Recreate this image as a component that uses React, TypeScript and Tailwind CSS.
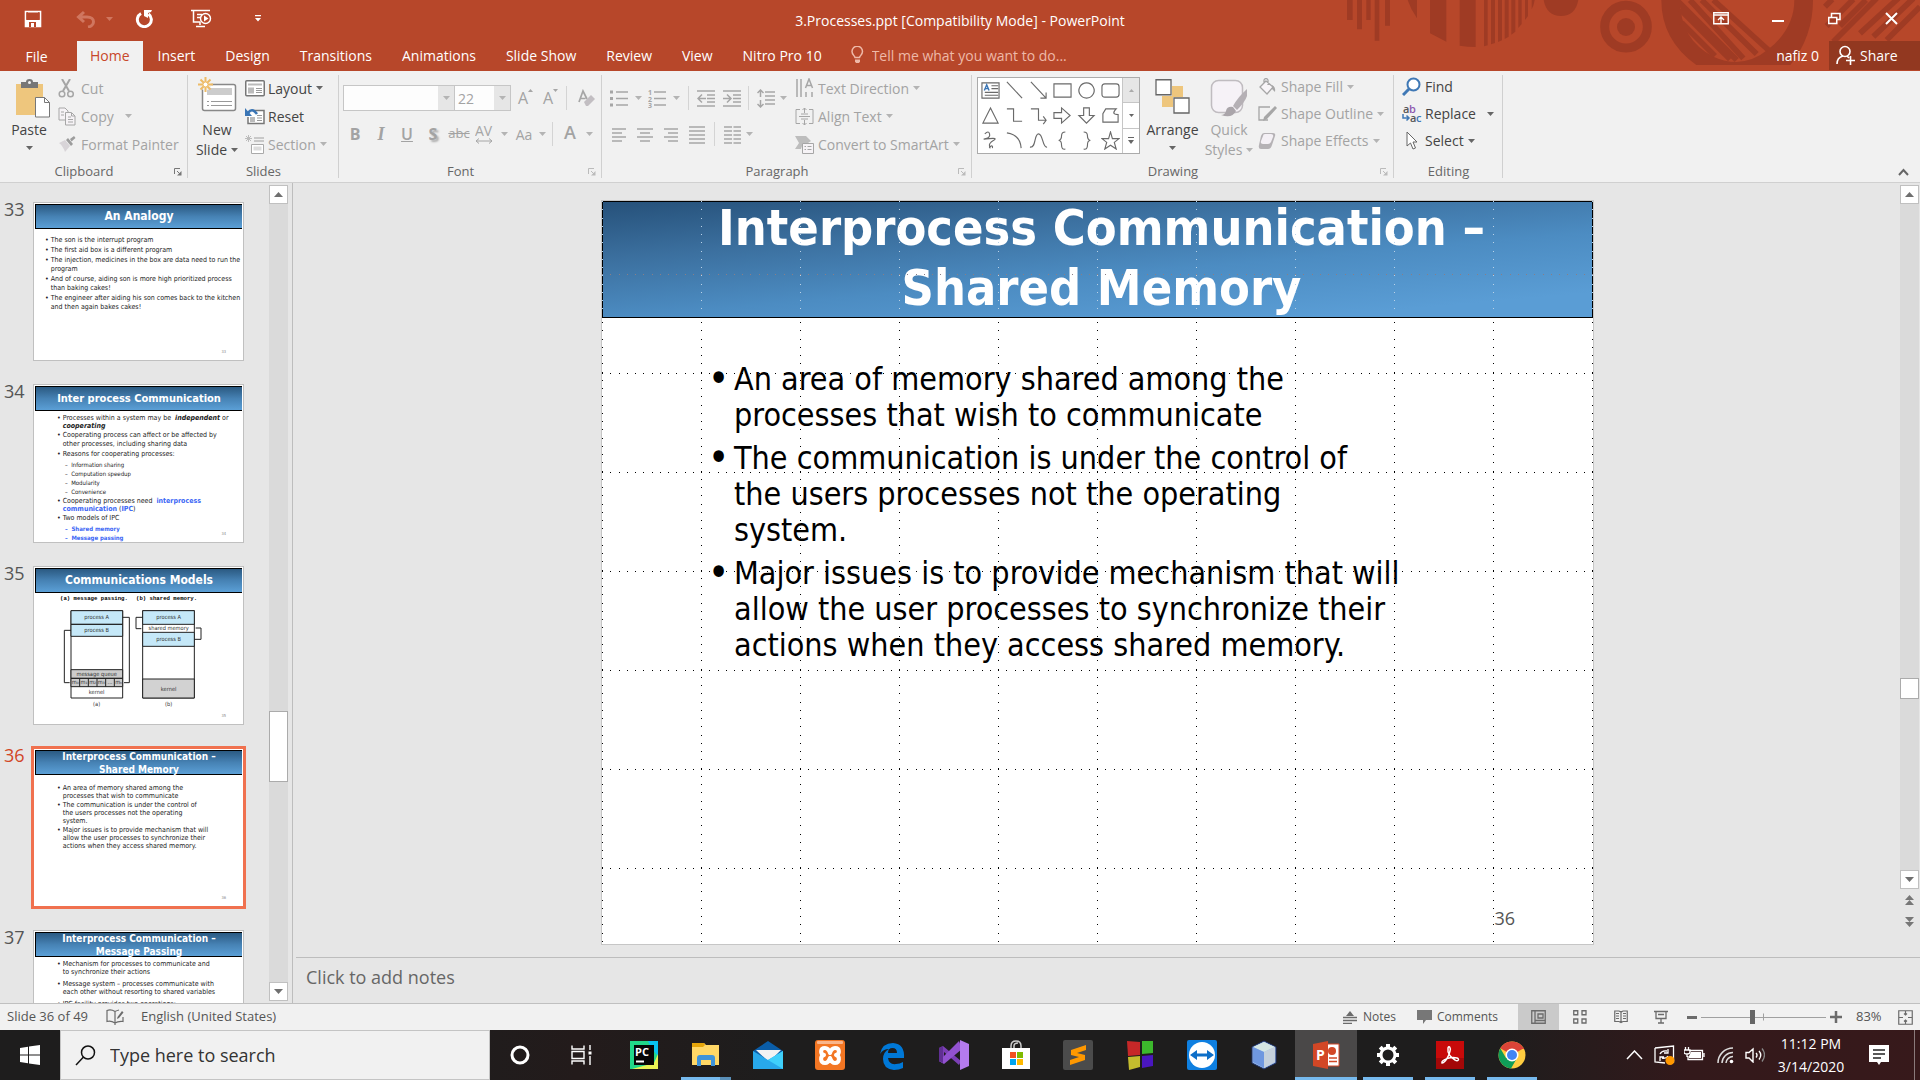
import type { ReactNode } from "react";

type IconProps = { children: ReactNode; w?: number; h?: number; box?: string; className?: string };

function Icon({ children, w = 18, h = 18, box, className = "" }: IconProps) {
  return (
    <svg
      width={w}
      height={h}
      viewBox={box ?? `0 0 ${w} ${h}`}
      fill="none"
      aria-hidden="true"
      className={`shrink-0 ${className}`}
    >
      {children}
    </svg>
  );
}

function Caret({ on = false, className = "" }: { on?: boolean; className?: string }) {
  return (
    <Icon w={7} h={4} className={className}>
      <path d="M0 0h7L3.5 4z" fill={on ? "#666" : "#b4b4b4"} />
    </Icon>
  );
}

/* ---------- title bar ---------- */

function Pattern() {
  const c = "#9f3b24";
  return (
    <svg className="absolute right-0 top-0" width="580" height="71" viewBox="0 0 1740 213" aria-hidden="true">
      <g fill={c}>
        <path d="M21 0h17v60H21zM51 0h15v88H51zM79 0h13v60H79zM104 0h14v122h-14zM135 0h15v77h-15z" />
        <path d="M203 0h28v55Q212 28 203 0zM270 0h49v125l-49-25zM359 0h48v141q-24 0-48-4z" />
        <path d="M432 0h11v136l-11 3zM453 0h12v129l-12 4zM474 0h12v121l-12 5zM494 0h12v110l-12 7zM514 0h12v95l-12 9zM535 0h10v72l-10 12zM555 0h9v48l-9 12zM575 0h9q-2 16-9 28z" />
        <path d="M611 0h104q-9 48-52 48t-52-48z" />
        <circle cx="858" cy="81" r="27" />
      </g>
      <circle cx="858" cy="80" r="64" fill="none" stroke={c} strokeWidth="27" />
      <path d="M964 0h56q0 118 100 170 90 40 165-22 78-62 78-148h56q0 110-68 195h-282q-105-75-105-195z" fill={c} />
      <g stroke={c} strokeWidth="17">
        <path d="M1020 28l150 150M1025 68l100 100M1050 0l160 175M1085 0l165 162M1120 0l165 150M1010 0l180 180" />
        <path d="M1455 20l22-22M1460 78l80-80M1500 78l78-78M1480 125l130-130M1560 100l120-110M1600 110l120-115M1640 120l100-100" />
      </g>
    </svg>
  );
}

function TitleBar() {
  return (
    <div className="relative flex h-[41px] items-center text-white">
      <div className="flex flex-1 items-center pb-1">
        <button aria-label="Save" className="ml-[24px]">
          <Icon w={18} h={18}>
            <path d="M1.500 1.500h15v15h-15z" stroke="#fff" strokeWidth="1.600" />
            <path d="M1 10h16v7H1zM4 2h10v1H4z" fill="#fff" />
            <path d="M5 12h7v5H5z" fill="#b7472a" />
            <path d="M7 13h3v4H7z" fill="#fff" />
            <path d="M2.500 2.500h13v7h-13z" fill="#b7472a" />
          </Icon>
        </button>
        <button aria-label="Undo" className="ml-[34px]">
          <Icon w={20} h={18}>
            <path d="M8 2L2.500 7 8 12M3 7h8c9 0 8 9 1 10" stroke="#d0765f" strokeWidth="3" />
          </Icon>
        </button>
        <button aria-label="Undo options" className="ml-[10px]">
          <Icon w={7} h={4}>
            <path d="M0 0h7L3.500 4z" fill="#d0765f" />
          </Icon>
        </button>
        <button aria-label="Repeat" className="ml-[22px]">
          <Icon w={19} h={18}>
            <path d="M6 3.500A7 7 0 1 0 13.500 4" stroke="#fff" strokeWidth="3" />
            <path d="M9 0h8l-1 2-3 1v5L9 6z" fill="#fff" />
          </Icon>
        </button>
        <button aria-label="Start from beginning" className="ml-[37px]">
          <Icon w={21} h={19}>
            <path d="M0 1.500h19M2.500 2v11h7M6 5.500h5M6 8.500h3M9 13v3M5 17.500h9" stroke="#fff" strokeWidth="1.500" />
            <circle cx="14.500" cy="9.500" r="5" stroke="#fff" strokeWidth="1.400" fill="#b7472a" />
            <path d="M13 6.500l4.500 3-4.500 3z" fill="#fff" />
          </Icon>
        </button>
        <button aria-label="Customize quick access toolbar" className="ml-[43px]">
          <Icon w={6} h={7}>
            <path d="M0 0h6v1.300H0zM0 3h6L3 6.500z" fill="#fff" />
          </Icon>
        </button>
      </div>
      <h1 className="text-[14px]">3.Processes.ppt [Compatibility Mode] - PowerPoint</h1>
      <div className="flex flex-1 items-center justify-end pb-1">
        <button aria-label="Ribbon display options" className="flex w-[57px] justify-center">
          <Icon w={16} h={13}>
            <path d="M.750.750h14.500v11H.750zM1 3h14M8 11V5M5 8l3-3 3 3" stroke="#fff" strokeWidth="1.400" />
          </Icon>
        </button>
        <button aria-label="Minimize" className="flex w-[57px] justify-center pt-1">
          <span className="h-[2px] w-[12px] bg-white" />
        </button>
        <button aria-label="Restore" className="flex w-[57px] justify-center">
          <Icon w={13} h={13}>
            <path d="M.750 5.500h8v6h-8zM3.500 5V1.500h8.500v6H9" stroke="#fff" strokeWidth="1.500" />
          </Icon>
        </button>
        <button aria-label="Close" className="flex w-[57px] justify-center">
          <Icon w={13} h={13}>
            <path d="M1 1l11 11M12 1L1 12" stroke="#fff" strokeWidth="2" />
          </Icon>
        </button>
      </div>
    </div>
  );
}

const tabs = ["Insert", "Design", "Transitions", "Animations", "Slide Show", "Review", "View", "Nitro Pro 10"];

function TabStrip() {
  return (
    <nav className="relative flex h-[30px] items-stretch text-[14px] text-white">
      <button className="w-[77px] pr-1">File</button>
      <button className="bg-[#f1f1f1] px-[13px] pb-[2px] text-[#c8472a]">Home</button>
      {tabs.map((t) => (
        <button key={t} className="px-[15px] pb-[2px]">
          {t}
        </button>
      ))}
      <label className="ml-[14px] flex items-center gap-2 pb-[2px] text-[#eeb9a8]">
        <Icon w={13} h={18}>
          <path d="M4 11.500C3.500 9.500 1 8.500 1 5.500a5 5 0 0 1 10.500 0C11.500 8.500 9 9.500 8.500 11.500z" stroke="#eeb9a8" strokeWidth="1.500" />
          <path d="M4 13.500h5v2L8 17H5l-1-1.500z" fill="#eeb9a8" />
        </Icon>
        <input
          aria-label="Tell me what you want to do"
          placeholder="Tell me what you want to do..."
          className="w-[220px] bg-transparent placeholder:text-[#eeb9a8]"
        />
      </label>
      <div className="ml-auto flex">
        <button className="px-[10px] pb-[2px]">nafiz 0</button>
        <button className="mb-px flex w-[91px] items-center gap-1 bg-[#923820] pl-[7px] pb-px">
          <Icon w={20} h={20}>
            <circle cx="9" cy="6.500" r="5" stroke="#fff" strokeWidth="1.600" />
            <path d="M1 19c0-4 2-7 6-8M11 11l2 2M10 15.500h9M14.500 11v9" stroke="#fff" strokeWidth="1.600" />
          </Icon>
          Share
        </button>
      </div>
    </nav>
  );
}

/* ---------- ribbon ---------- */

function Launcher({ on = false }: { on?: boolean }) {
  return (
    <button aria-label="More options" className="absolute bottom-[6px] right-[6px]">
      <Icon w={8} h={8}>
        <path d="M.500 6V.500H6M3 3l3 3" stroke={on ? "#777" : "#bbb"} />
        <path d="M7.500 3v4.500H3z" fill={on ? "#777" : "#bbb"} />
      </Icon>
    </button>
  );
}

function Group({
  label,
  width,
  launcher,
  children,
}: {
  label: string;
  width: string;
  launcher?: "on" | "off";
  children: ReactNode;
}) {
  return (
    <section aria-label={label} className={`relative flex flex-col ${width}`}>
      <div className="flex flex-1">{children}</div>
      <div className={`flex h-5 items-center justify-center text-[13px] text-[#666] ${launcher ? "pr-5" : ""}`}>{label}</div>
      {launcher && <Launcher on={launcher === "on"} />}
      <div className="absolute bottom-1 right-0 top-1 w-px bg-[#d0d0d0]" />
    </section>
  );
}

function Row({
  icon,
  text,
  on = false,
  caret,
  far = false,
}: {
  icon: ReactNode;
  text: string;
  on?: boolean;
  caret?: boolean;
  far?: boolean;
}) {
  return (
    <button className={`flex flex-1 items-center whitespace-nowrap text-[14px] ${on ? "text-[#444]" : "text-[#a3a3a3]"}`}>
      <span className="flex w-[23px] items-center">{icon}</span>
      {text}
      {caret && <Caret on={on} className={far ? "ml-[11px]" : "ml-1"} />}
    </button>
  );
}

function Sep({ className = "" }: { className?: string }) {
  return <span className={`h-6 w-px shrink-0 bg-[#d4d4d4] ${className}`} />;
}

function Tool({ label, width, children }: { label: string; width: string; children: ReactNode }) {
  return (
    <button aria-label={label} className={`flex shrink-0 items-center justify-center ${width}`}>
      {children}
    </button>
  );
}

const g = "#a6a6a6";

function Clipboard() {
  return (
    <Group label="Clipboard" width="w-[188px]" launcher="on">
      <button className="ml-2 flex w-[42px] flex-col items-center pt-2 text-[14px] text-[#444]">
        <Icon w={36} h={39} className="ml-2">
          <path d="M1 5h27v31H1z" fill="#eec67d" />
          <path d="M6 9V3h5q0-3 3.500-3T18 3h5v6z" fill="#777" />
          <circle cx="14.500" cy="3.500" r="1.500" fill="#f1f1f1" />
          <path d="M20.500 18.500h9l5 5v14.500h-14z" fill="#fff" stroke="#777" />
          <path d="M29.500 18.500v5h5" stroke="#777" />
        </Icon>
        <span className="leading-6">Paste</span>
        <Caret on className="mt-1" />
      </button>
      <div className="ml-2 flex h-[87px] flex-col pt-[3px]">
        <Row
          text="Cut"
          icon={
            <Icon w={17} h={19}>
              <path d="M4 0l7 12M12 0L5 12" stroke={g} strokeWidth="2" />
              <circle cx="4" cy="15" r="2.800" stroke={g} strokeWidth="1.500" />
              <circle cx="12.500" cy="15" r="2.800" stroke={g} strokeWidth="1.500" />
            </Icon>
          }
        />
        <Row
          text="Copy"
          caret
          far
          icon={
            <Icon w={18} h={19}>
              <path d="M1 1h6l3 3v9H1z" fill="#f6f3f6" stroke={g} />
              <path d="M7.500 5.500h6l3.500 3.500v9H7.500z" fill="#f6f3f6" stroke={g} />
              <path d="M3 5h3M3 8h3M10 10h3M10 12.500h5M10 15h5M13.500 6v3H17" stroke={g} />
            </Icon>
          }
        />
        <Row
          text="Format Painter"
          icon={
            <Icon w={18} h={18}>
              <path d="M1 8l6-3 5 6-5 6c-1-3-3-7-6-9z" fill="#d8d4d8" />
              <path d="M8 5l5 6 2-2-5-6zM12 4l4-3 1.500 2-4 3.500z" fill="#9c9c9c" />
            </Icon>
          }
        />
      </div>
    </Group>
  );
}

function Slides() {
  return (
    <Group label="Slides" width="w-[151px]">
      <button className="ml-[6px] flex w-[46px] flex-col items-center pt-[6px] text-[14px] text-[#444]">
        <Icon w={39} h={36}>
          <rect x="4.500" y="7.500" width="33" height="26" rx="2" fill="#fff" stroke="#888" strokeWidth="1.500" />
          <path d="M9 11h25v7H9z" fill="#ccc" />
          <path d="M9 24.500h2M13 24.500h21M9 28.500h2M13 28.500h21" stroke="#999" />
          <circle cx="7.500" cy="7.500" r="6" fill="#f1f1f1" />
          <path d="M7.500 0v15M0 7.500h15M2.500 2.500l10 10M12.500 2.500l-10 10" stroke="#eebb66" strokeWidth="2" />
          <circle cx="7.500" cy="7.500" r="2.500" fill="#fff" stroke="#eebb66" />
        </Icon>
        <span className="mt-[6px] leading-[21px]">New</span>
        <span className="flex items-center gap-1 leading-5">
          Slide <Caret on />
        </span>
      </button>
      <div className="ml-[5px] flex h-[87px] flex-col pt-[3px]">
        <Row
          on
          text="Layout"
          caret
          icon={
            <Icon w={20} h={17}>
              <rect x=".750" y=".750" width="18.500" height="15" rx="1" fill="#fff" stroke="#777" strokeWidth="1.500" />
              <path d="M3 3.500h14v2H3zM3 7.500h6v6H3z" fill="#bbb" />
              <path d="M11 8.500h6M11 10.500h6M11 12.500h6" stroke="#999" />
            </Icon>
          }
        />
        <Row
          on
          text="Reset"
          icon={
            <Icon w={20} h={18}>
              <path d="M8 3.500h11v13H3V10" fill="#fff" stroke="#777" strokeWidth="1.500" />
              <path d="M5 10h5v5H5z" fill="#bbb" />
              <path d="M12 8.500h5M12 11h5M12 13.500h5" stroke="#999" />
              <path d="M3 6q4-6 9 1" stroke="#3a75b5" strokeWidth="2.500" />
              <path d="M0 1v8h7z" fill="#3a75b5" />
            </Icon>
          }
        />
        <Row
          text="Section"
          caret
          icon={
            <Icon w={20} h={19}>
              <path d="M3.500 0v7M0 3.500h7M1 1l5 5M6 1L1 6" stroke="#bbb" />
              <path d="M9 3h10M9 6h10" stroke="#bbb" strokeWidth="1.500" />
              <path d="M6.500 9.500h12v9h-12z" fill="#fff" stroke="#aaa" />
              <path d="M8.500 11.500h8v4h-8z" fill="#ddd" />
            </Icon>
          }
        />
      </div>
    </Group>
  );
}

function FontGroup() {
  return (
    <Group label="Font" width="w-[263px]" launcher="off">
      <div className="flex flex-col pl-1 text-[#a3a3a3]">
        <div className="mt-[14px] flex h-[26px] items-center">
          <label className="flex h-[26px] w-[112px] border border-[#c6c6c6] bg-[#fdfdfd]">
            <input aria-label="Font name" className="w-full min-w-0 bg-transparent" />
            <span className="flex w-4 shrink-0 items-center justify-center bg-[#e6e6e6]">
              <Caret />
            </span>
          </label>
          <label className="flex h-[26px] w-[56px] border border-l-0 border-[#c6c6c6] bg-[#fdfdfd]">
            <input aria-label="Font size" defaultValue="22" className="w-full min-w-0 bg-transparent pl-[3px] text-[14px]" />
            <span className="flex w-4 shrink-0 items-center justify-center bg-[#e6e6e6]">
              <Caret />
            </span>
          </label>
          <Tool label="Increase font size" width="ml-[2px] w-[25px]">
            <span className="text-[16px] leading-6">A</span>
            <Icon w={5} h={3} className="mb-4">
              <path d="M0 3h5L2.500 0z" fill={g} />
            </Icon>
          </Tool>
          <Tool label="Decrease font size" width="w-[25px]">
            <span className="text-[16px] leading-6">A</span>
            <Icon w={5} h={3} className="mb-4">
              <path d="M0 0h5L2.500 3z" fill={g} />
            </Icon>
          </Tool>
          <Sep className="ml-[3px]" />
          <Tool label="Clear formatting" width="ml-2 w-[22px]">
            <Icon w={17} h={19}>
              <path d="M1 13L5 2l4 8M2.500 9.500h5" stroke={g} strokeWidth="1.700" />
              <path d="M6 13l7-7 4 4-7 7H8z" fill="#c2bec2" />
            </Icon>
          </Tool>
        </div>
        <div className="-ml-px mt-[11px] flex h-6 items-center text-[16px]">
          <Tool label="Bold" width="w-[26px]">
            <b>B</b>
          </Tool>
          <Tool label="Italic" width="w-[26px]">
            <i className="font-['Liberation_Serif'] text-[18px] font-bold">I</i>
          </Tool>
          <Tool label="Underline" width="w-[26px]">
            <span className="font-semibold underline">U</span>
          </Tool>
          <Tool label="Text shadow" width="w-[26px]">
            <b className="[text-shadow:2px_2px_2px_#aaa]">S</b>
          </Tool>
          <Tool label="Strikethrough" width="w-[26px]">
            <span className="text-[13px] line-through">abc</span>
          </Tool>
          <Tool label="Character spacing" width="w-6">
            <Icon w={18} h={20}>
              <text x="0" y="12" fontSize="14" fill={g}>AV</text>
              <path d="M1 17h16M4 14.500L1 17l3 2.500M14 14.500l3 2.500-3 2.500" stroke={g} />
            </Icon>
          </Tool>
          <Tool label="Character spacing options" width="w-4">
            <Caret />
          </Tool>
          <Tool label="Change case" width="w-6">
            <span className="text-[14px]">Aa</span>
          </Tool>
          <Tool label="Change case options" width="w-3">
            <Caret />
          </Tool>
          <Sep className="ml-1" />
          <Tool label="Font color" width="ml-1 w-[26px]">
            <span className="pb-1 text-[18px] font-semibold">A</span>
          </Tool>
          <Tool label="Font color options" width="w-3">
            <Caret />
          </Tool>
        </div>
      </div>
    </Group>
  );
}

function Lines({ d, w = 18 }: { d: string; w?: number }) {
  return (
    <Icon w={w} h={19}>
      <path d={d} stroke={g} strokeWidth="1.500" />
    </Icon>
  );
}

function Paragraph() {
  return (
    <Group label="Paragraph" width="w-[370px]" launcher="off">
      <div className="flex w-[193px] flex-col pl-1">
        <div className="mt-[14px] flex h-[26px] items-center">
          <Tool label="Bullets" width="w-[26px]">
            <Icon w={18} h={19}>
              <path d="M6 3h12M6 9.500h12M6 16h12" stroke={g} strokeWidth="1.500" />
              <path d="M0 1.500h3v3H0zM0 8h3v3H0zM0 14.500h3v3H0z" fill={g} />
            </Icon>
          </Tool>
          <Tool label="Bullet options" width="w-3">
            <Caret />
          </Tool>
          <Tool label="Numbering" width="w-[26px]">
            <Icon w={18} h={19}>
              <path d="M6 3h12M6 9.500h12M6 16h12" stroke={g} strokeWidth="1.500" />
              <text x="0" y="6" fontSize="7" fontWeight="700" fill={g}>1</text>
              <text x="0" y="13" fontSize="7" fontWeight="700" fill={g}>2</text>
              <text x="0" y="19" fontSize="7" fontWeight="700" fill={g}>3</text>
            </Icon>
          </Tool>
          <Tool label="Numbering options" width="w-3">
            <Caret />
          </Tool>
          <Sep className="ml-[6px]" />
          <Tool label="Decrease indent" width="ml-1 w-[26px]">
            <Lines d="M0 2h18M10 6h8M10 9.500h8M10 13h8M0 17h18M1 9.500h8M5 5.500l-4 4 4 4" />
          </Tool>
          <Tool label="Increase indent" width="w-[26px]">
            <Lines d="M0 2h18M10 6h8M10 9.500h8M10 13h8M0 17h18M0 9.500h8M4 5.500l4 4-4 4" />
          </Tool>
          <Sep className="ml-[3px]" />
          <Tool label="Line spacing" width="ml-1 w-[26px]">
            <Lines d="M8 3h10M8 7h10M8 11h10M8 15h10M3.500 1v7M3.500 11v7M.500 4l3-3 3 3M.500 15l3 3 3-3" />
          </Tool>
          <Tool label="Line spacing options" width="w-2">
            <Caret />
          </Tool>
        </div>
        <div className="mt-[11px] flex h-6 items-center">
          <Tool label="Align left" width="w-[26px]">
            <Lines w={16} d="M1 4h14M1 8h10M1 12h14M1 16h10" />
          </Tool>
          <Tool label="Center" width="w-[26px]">
            <Lines w={16} d="M0 4h16M3 8h10M0 12h16M3 16h10" />
          </Tool>
          <Tool label="Align right" width="w-[26px]">
            <Lines w={16} d="M1 4h14M5 8h10M1 12h14M5 16h10" />
          </Tool>
          <Tool label="Justify" width="w-[26px]">
            <Lines w={16} d="M0 2h16M0 6h16M0 10h16M0 14h16M0 18h16" />
          </Tool>
          <Sep className="ml-1" />
          <Tool label="Columns" width="ml-1 w-[26px]">
            <Lines w={17} d="M0 2h8M9.500 2h7.500M0 6h8M9.500 6h7.500M0 10h8M9.500 10h7.500M0 14h8M9.500 14h7.500M0 18h8M9.500 18h7.500" />
          </Tool>
          <Tool label="Column options" width="w-2">
            <Caret />
          </Tool>
        </div>
      </div>
      <div className="flex h-[87px] flex-col pt-[3px]">
        <Row
          text="Text Direction"
          caret
          icon={
            <Icon w={19} h={20}>
              <path d="M2 1v18M6 1v18M11 14v5M17 14v5M10.500 10L14 1l3.500 9M12 7.500h4" stroke={g} strokeWidth="1.500" />
            </Icon>
          }
        />
        <Row
          text="Align Text"
          caret
          icon={
            <Icon w={19} h={19}>
              <path d="M5 2.500H1v14h4M14 2.500h4v14h-4M4 9.500h11M6 7h7M6 12h7M9.500 1v5M9.500 13v5M7.500 3l2-2 2 2M7.500 16l2 2 2-2" stroke={g} />
            </Icon>
          }
        />
        <Row
          text="Convert to SmartArt"
          caret
          icon={
            <Icon w={20} h={19}>
              <path d="M0 1h11l5 5-3 2H8L6 14H0l4-6z" fill="#bdbdbd" />
              <path d="M7.500 8.500h11v10h-11z" fill="#f6f3f6" stroke={g} />
              <path d="M9.500 11.500h1.500M12.500 11.500h4M9.500 14.500h1.500M12.500 14.500h4" stroke={g} />
            </Icon>
          }
        />
      </div>
    </Group>
  );
}

const shapes = [
  "M1 2h18v16H1zM11 5h7M11 8h7M4 12h14M4 15h14",
  "M2 1l16 17",
  "M2 1l16 17M18 12v6h-6",
  "M1 3h18v14H1z",
  "M10 2a8 8 0 1 0 .1 0z",
  "M4 3h12q3 0 3 3v8q0 3-3 3H4q-3 0-3-3V6q0-3 3-3z",
  "M10 2l8 16H2z",
  "M2 3h7v13h9",
  "M2 3h8v12h8M15 11l3 4-3 4",
  "M1 7h8V2l9 8-9 8v-5H1z",
  "M7 2h6v8h5l-8 8-8-8h5z",
  "M5 3h11q-6 6 2 6v8H2V8z",
  "M4 3q4-4 5 0t-4 5 4 0 4 2-4 6 0 1q4-3 3 1",
  "M2 2q14 2 15 16",
  "M1 17C8 18 5 3 10 3s4 15 9 14",
  "M13 1q-4 0-4 4t-3 5q3 0 3 5t4 4",
  "M7 1q4 0 4 4t3 5q-3 0-3 5t-4 4",
  "M10 1l2 7h7l-5 4 2 7-6-4-6 4 2-7-5-4h7z",
];

function Drawing() {
  return (
    <Group label="Drawing" width="w-[422px]" launcher="off">
      <div className="ml-[5px] mt-[6px] flex h-[77px] w-[163px] border border-[#ababab] bg-white">
        <div className="grid flex-1 grid-cols-6 items-center justify-items-center">
          {shapes.map((d, i) => (
            <button key={d} aria-label={`Shape ${i + 1}`}>
              <Icon w={19} h={19} box="0 0 20 20">
                <path d={d} stroke="#6a6a6a" strokeWidth="1.200" />
                {i === 0 && <path d="M3.500 10l2.500-6 2.500 6M4.500 8h3" stroke="#3a75b5" strokeWidth="1.500" />}
              </Icon>
            </button>
          ))}
        </div>
        <div className="flex w-[17px] flex-col divide-y divide-[#c6c6c6] border-l border-[#c6c6c6]">
          <button aria-label="Scroll shapes up" className="flex flex-1 items-center justify-center bg-[#e6e6e6]">
            <Icon w={5} h={3}>
              <path d="M0 3h5L2.500 0z" fill="#aaa" />
            </Icon>
          </button>
          <button aria-label="Scroll shapes down" className="flex flex-1 items-center justify-center">
            <Icon w={5} h={3}>
              <path d="M0 0h5L2.500 3z" fill="#666" />
            </Icon>
          </button>
          <button aria-label="More shapes" className="flex flex-1 items-center justify-center">
            <Icon w={6} h={7}>
              <path d="M0 0h6v1H0zM0 3h6L3 7z" fill="#666" />
            </Icon>
          </button>
        </div>
      </div>
      <button className="flex w-[65px] flex-col items-center pt-2 text-[14px] text-[#444]">
        <Icon w={36} h={36}>
          <path d="M17 7h11v11H17zM7 17h11v11H7z" fill="#eec67d" />
          <path d="M1 .750h15v15H1zM19 19h15v15H19z" fill="#fff" stroke="#666" strokeWidth="1.300" />
        </Icon>
        <span className="mt-[3px] leading-6">Arrange</span>
        <Caret on className="mt-1" />
      </button>
      <button className="flex w-[48px] flex-col items-center pt-2 text-[14px] text-[#a3a3a3]">
        <Icon w={38} h={38}>
          <rect x="1.500" y="1.500" width="31" height="32" rx="7" fill="#f6f2f7" stroke="#c0bcc0" strokeWidth="1.500" />
          <path d="M37 10q-9 8-14 17l4 4q8-8 10-14z" fill="#b5b0b5" />
          <path d="M23 28q-6-1-7 4-1 4-5 4 11 4 15-4z" fill="#aaa5aa" />
        </Icon>
        <span className="mt-[2px] leading-[21px]">Quick</span>
        <span className="flex items-center gap-1 leading-5">
          Styles <Caret />
        </span>
      </button>
      <div className="ml-[5px] flex h-[83px] flex-col pt-[2px]">
        <Row
          text="Shape Fill"
          caret
          icon={
            <Icon w={18} h={18}>
              <path d="M8 3l7 6-6 7-7-7zM6 6V2q2-3 4 0v5" stroke={g} strokeWidth="1.300" fill="#f8f5f8" />
              <path d="M14 7q4 2 3 7l-3-3z" fill={g} />
            </Icon>
          }
        />
        <Row
          text="Shape Outline"
          caret
          icon={
            <Icon w={19} h={18}>
              <path d="M12 2H1v13h9" stroke={g} strokeWidth="1.300" />
              <path d="M17 1l2 2L9 14l-4 2 1-4z" fill={g} />
            </Icon>
          }
        />
        <Row
          text="Shape Effects"
          caret
          icon={
            <Icon w={18} h={18}>
              <path d="M6 1h9q3 0 2 3l-3 9q-1 4-4 4H3q-3 0-2-4L3 4q1-3 3-3z" fill="#b5b2b5" />
              <path d="M7 2h6q3 0 2 3l-2 5q-1 2-3 2H5q-3 0-2-3l2-5q0-2 2-2z" fill="#f4f0f5" />
            </Icon>
          }
        />
      </div>
    </Group>
  );
}

function Editing() {
  return (
    <Group label="Editing" width="w-[109px]">
      <div className="ml-2 flex h-[83px] flex-col pt-[2px]">
        <Row
          on
          text="Find"
          icon={
            <Icon w={19} h={19}>
              <circle cx="11.500" cy="7.500" r="6" stroke="#3f78b5" strokeWidth="2" fill="#fff" />
              <path d="M7 12l-6 6" stroke="#3f78b5" strokeWidth="3" />
            </Icon>
          }
        />
        <Row
          on
          text="Replace"
          caret
          far
          icon={
            <Icon w={20} h={19}>
              <text x="1" y="9" fontSize="11" fontWeight="600" fill="#555">a</text>
              <text x="7" y="9" fontSize="11" fontWeight="600" fill="#8e5ab0">b</text>
              <text x="8" y="18" fontSize="11" fontWeight="600" fill="#555">a</text>
              <text x="14" y="18" fontSize="11" fontWeight="600" fill="#3f78b5">c</text>
              <path d="M1 10v4h6M4.500 11.500L7 14l-2.500 2.500" stroke="#3f78b5" strokeWidth="1.500" />
            </Icon>
          }
        />
        <Row
          on
          text="Select"
          caret
          icon={
            <Icon w={16} h={19}>
              <path d="M5 1v14l3.500-3 2.500 6 2.500-1-2.500-6H15z" fill="#fff" stroke="#666" />
            </Icon>
          }
        />
      </div>
    </Group>
  );
}

/* ---------- slide list ---------- */

const titleStyles = {
  large: "text-[12px] leading-[23px]",
  medium: "text-[11px] leading-[23px]",
  two: "text-[10px] leading-[13px]",
};

function Thumb({
  n,
  title,
  size = "large",
  selected = false,
  children,
}: {
  n: number;
  title: ReactNode;
  size?: keyof typeof titleStyles;
  selected?: boolean;
  children: ReactNode;
}) {
  return (
    <li className="flex shrink-0 items-start">
      <span className={`w-[33px] pl-[4px] text-[18px] leading-[14px] ${selected ? "text-[#d24726]" : "text-[#555]"}`}>{n}</span>
      <button
        className={`relative flex h-[159px] w-[211px] flex-col items-stretch justify-start overflow-hidden border border-[#c0c0c0] bg-white p-px pl-px text-left font-['DejaVu_Sans_Condensed'] text-[7px] text-[#222] ${
          selected ? "outline-[3px] -outline-offset-1 outline-[#f0714f]" : ""
        }`}
      >
        <span
          className={`flex h-[25px] shrink-0 items-center justify-center border border-r-0 border-black bg-linear-to-b from-[#2b5a82] via-[#4682b4] to-[#5b9fd6] text-center font-bold text-white ${titleStyles[size]}`}
        >
          {title}
        </span>
        {children}
        <span className="absolute bottom-[5px] right-[17px] text-[4px] text-[#888]">{n}</span>
      </button>
    </li>
  );
}

function Bullet({ lines, lead = "" }: { lines: ReactNode[]; lead?: string }) {
  return (
    <span className={`flex gap-[2px] whitespace-nowrap ${lead}`}>
      <span>•</span>
      <span>
        {lines.map((l, i) => (
          <span key={i} className="block">
            {l}
          </span>
        ))}
      </span>
    </span>
  );
}

function Dash({ children, blue = false }: { children: ReactNode; blue?: boolean }) {
  return (
    <span className={`block whitespace-nowrap pl-[8px] text-[6px] leading-[9px] ${blue ? "font-bold text-[#3b66f5]" : ""}`}>
      – &nbsp;{children}
    </span>
  );
}

function ModelsDiagram() {
  return (
    <svg
      width="207"
      height="130"
      viewBox="105 129 621 390"
      className="shrink-0"
      aria-label="Message passing and shared memory diagrams"
    >
      <g fontFamily="Liberation Mono" fontSize="17" fontWeight="700" fill="#000">
        <text x="180" y="151">(a) message passing.</text>
        <text x="408" y="151">(b) shared memory.</text>
      </g>
      <g stroke="#222" strokeWidth="3">
        <path d="M213 182h155v262H213z" fill="#fff" />
        <path d="M213 182h155v41H213zM213 223h155v36H213z" fill="#c5e8f8" />
        <path d="M213 359h155v26H213zM213 385h155v25H213z" fill="#ccc" />
        <path d="M239 385v25M265 385v25M291 385v25M317 385v25M343 385v25" />
        <path d="M428 182h155v262H428z" fill="#fff" />
        <path d="M428 182h155v41H428zM428 247h155v42H428z" fill="#c5e8f8" />
        <path d="M428 387h155v57H428z" fill="#d2d2d2" />
        <path d="M368 202h20v196h-16M213 241h-20v157h16M428 202h-20v34h16M583 268h20v-34h-16" fill="none" />
      </g>
      <g fontSize="17" fill="#333" textAnchor="middle">
        <text x="290" y="208">process A</text>
        <text x="290" y="247">process B</text>
        <text x="290" y="379">message queue</text>
        <text x="226" y="403">m₀</text>
        <text x="252" y="403">m₁</text>
        <text x="278" y="403">m₂</text>
        <text x="304" y="403">m₃</text>
        <text x="330" y="403">...</text>
        <text x="356" y="403">mₙ</text>
        <text x="290" y="433">kernel</text>
        <text x="290" y="469">(a)</text>
        <text x="506" y="208">process A</text>
        <text x="506" y="239">shared memory</text>
        <text x="506" y="274">process B</text>
        <text x="506" y="422">kernel</text>
        <text x="506" y="469">(b)</text>
      </g>
    </svg>
  );
}

function UpDown({ up = false }: { up?: boolean }) {
  return (
    <Icon w={9} h={5}>
      <path d={up ? "M0 5h9L4.500 0z" : "M0 0h9L4.500 5z"} fill="#6f6f6f" />
    </Icon>
  );
}

function ScrollButton({ up = false }: { up?: boolean }) {
  return (
    <button
      aria-label={up ? "Scroll up" : "Scroll down"}
      className="flex h-[19px] shrink-0 items-center justify-center border border-[#c0c0c0] bg-white"
    >
      <UpDown up={up} />
    </button>
  );
}

function SlideList() {
  return (
    <aside className="flex w-[293px] shrink-0 border-r border-[#bdbdbd]">
      <ol className="flex min-w-0 flex-1 flex-col gap-[23px] overflow-hidden pt-[19px]">
        <Thumb n={33} title="An Analogy">
          <span className="flex flex-col gap-px pl-[10px] pt-[7px] leading-[9px]">
            <Bullet lines={["The son is the interrupt program"]} />
            <Bullet lines={["The first aid box is a different program"]} />
            <Bullet lines={["The injection, medicines in the box are data need to run the", "program"]} />
            <Bullet lines={["And of course, aiding son is more high prioritized process", "than baking cakes!"]} />
            <Bullet lines={["The engineer after aiding his son comes back to the kitchen", "and then again bakes cakes!"]} />
          </span>
        </Thumb>
        <Thumb n={34} size="medium" title="Inter process Communication">
          <span className="flex flex-col gap-px pl-[22px] pt-[3px] leading-[8px]">
            <Bullet
              lines={[
                <>
                  Processes within a system may be &nbsp;<b><i>independent</i></b> or
                </>,
                <b><i>cooperating</i></b>,
              ]}
            />
            <Bullet lead="leading-[9px]" lines={["Cooperating process can affect or be affected by", "other processes, including sharing data"]} />
            <Bullet lead="leading-[9px]" lines={["Reasons for cooperating processes:"]} />
            <span>
              <Dash>Information sharing</Dash>
              <Dash>Computation speedup</Dash>
              <Dash>Modularity</Dash>
              <Dash>Convenience</Dash>
            </span>
            <Bullet
              lines={[
                <>
                  Cooperating processes need &nbsp;<b className="text-[#3b66f5]">interprocess</b>
                </>,
                <>
                  <b className="text-[#3b66f5]">communication</b> (<b className="text-[#3b66f5]">IPC</b>)
                </>,
              ]}
            />
            <Bullet lead="leading-[9px]" lines={["Two models of IPC"]} />
            <span>
              <Dash blue>Shared memory</Dash>
              <Dash blue>Message passing</Dash>
            </span>
          </span>
        </Thumb>
        <Thumb n={35} title="Communications Models">
          <ModelsDiagram />
        </Thumb>
        <Thumb n={36} selected size="two" title={<>Interprocess Communication –<br />Shared Memory</>}>
          <span className="flex flex-col gap-px pl-[22px] pt-[9px] leading-[8px]">
            <Bullet lines={["An area of memory shared among the", "processes that wish to communicate"]} />
            <Bullet lines={["The communication is under the control of", "the users processes not the operating", "system."]} />
            <Bullet
              lines={["Major issues is to provide mechanism that will", "allow the user processes to synchronize their", "actions when they access shared memory."]}
            />
          </span>
        </Thumb>
        <Thumb n={37} size="two" title={<>Interprocess Communication –<br />Message Passing</>}>
          <span className="flex flex-col gap-[4px] pl-[22px] pt-[3px] leading-[8px]">
            <Bullet lines={["Mechanism for processes to communicate and", "to synchronize their actions"]} />
            <Bullet lines={["Message system – processes communicate with", "each other without resorting to shared variables"]} />
            <Bullet lines={["IPC facility provides two operations:"]} />
          </span>
        </Thumb>
      </ol>
      <div className="mb-[2px] mr-[4px] mt-[2px] flex w-[19px] flex-col bg-[#dadada]">
        <ScrollButton up />
        <div className="flex-[507]" />
        <div className="h-[71px] border border-[#ababab] bg-white" />
        <div className="flex-[200]" />
        <ScrollButton />
      </div>
    </aside>
  );
}

/* ---------- slide canvas ---------- */

function GridDots() {
  const cols = [0, 1, 2, 3, 4, 5, 6, 7, 8, 9, 10];
  const rows = [0, 1, 2, 3, 4, 5, 6];
  return (
    <svg
      className="pointer-events-none absolute inset-0"
      width="100%"
      height="100%"
      viewBox="0 0 991 743"
      shapeRendering="crispEdges"
      aria-hidden="true"
    >
      {cols.map((c) => (
        <g key={c}>
          <path d={`M${c * 99 + 0.5} 0V116`} stroke="#b9d2e8" strokeDasharray="1 7.250" />
          <path d={`M${c * 99 + 0.5} 121V743`} stroke="#000" strokeDasharray="1 7.250" />
        </g>
      ))}
      {rows.map((r) => (
        <path key={r} d={`M0 ${r * 99 + 73.5}H991`} stroke={r === 0 ? "#8a7f86" : "#000"} strokeDasharray="1 7.250" />
      ))}
    </svg>
  );
}

const points = [
  ["An area of memory shared among the", "processes that wish to communicate"],
  ["The communication is under the control of", "the users processes not the operating", "system."],
  ["Major issues is to provide mechanism that will", "allow the user processes to synchronize their", "actions when they access shared memory."],
];

function Slide() {
  return (
    <article className="relative mx-auto mt-[17px] flex h-[745px] w-[993px] flex-col border border-[#c6c6c6] bg-white font-['DejaVu_Sans_Condensed'] text-black">
      <h2 className="flex h-[117px] items-center justify-center border border-black bg-[linear-gradient(175deg,#26517a_0%,#3b6f9e_28%,#4c8cc2_58%,#5a9dd5_88%)] pb-1 pl-2 text-center text-[50px] font-bold leading-[60px] text-white">
        <span>
          Interprocess Communication –
          <br />
          Shared Memory
        </span>
      </h2>
      <ul className="flex flex-col gap-[7px] pl-[106px] pt-[43px] text-[32px] leading-[36px]">
        {points.map((p) => (
          <li key={p[0]} className="flex">
            <span className="h-9 w-[26px] text-[40px] leading-[34px]">•</span>
            <span className="whitespace-nowrap">
              {p.map((l) => (
                <span key={l} className="block">
                  {l}
                </span>
              ))}
            </span>
          </li>
        ))}
      </ul>
      <p className="mt-auto pb-3 pr-[78px] text-right font-['Open_Sans'] text-[18px] text-[#555]">36</p>
      <GridDots />
    </article>
  );
}

function DoubleArrow({ up = false }: { up?: boolean }) {
  return (
    <button aria-label={up ? "Previous slide" : "Next slide"} className="flex h-[22px] items-center justify-center">
      <Icon w={9} h={11}>
        <path d={up ? "M0 5h9L4.500 0zM0 10h9L4.500 5z" : "M0 0h9L4.500 5zM0 5h9l-4.500 5z"} fill="#777" />
      </Icon>
    </button>
  );
}

function Editor() {
  return (
    <main className="flex min-w-0 flex-1 flex-col">
      <div className="flex flex-1">
        <div className="min-w-0 flex-1 pl-[2px]">
          <Slide />
        </div>
        <div className="mr-[1px] flex w-[19px] flex-col pt-[2px]">
          <ScrollButton up />
          <div className="flex flex-1 flex-col bg-[#dadada]">
            <div className="flex-[474]" />
            <div className="h-[21px] border border-[#ababab] bg-white" />
            <div className="flex-[171]" />
          </div>
          <ScrollButton />
          <DoubleArrow up />
          <DoubleArrow />
          <div className="h-[24px]" />
        </div>
      </div>
      <div className="ml-[3px] flex h-[46px] items-center border-t border-[#bdbdbd] pb-[6px] pl-[10px]">
        <input aria-label="Notes" placeholder="Click to add notes" className="w-full bg-transparent text-[18px] placeholder:text-[#666]" />
      </div>
    </main>
  );
}

/* ---------- status bar ---------- */

const s = "#6b6b6b";

function StatusBar() {
  return (
    <footer className="flex h-[27px] shrink-0 items-center border-t border-[#c0c0c0] bg-[#f1f1f1] text-[13px] text-[#555]">
      <span className="ml-[7px]">Slide 36 of 49</span>
      <button aria-label="Spelling" className="ml-[18px]">
        <Icon w={18} h={16}>
          <path d="M9 2.500Q5 0 1 1.500v11q4-1 8 1.500zM9 2.500q2-1 4-1.500M9 14q3-2 8-1.500V8M9 14v2" stroke={s} strokeWidth="1.200" />
          <path d="M16 2l1.500 1.500L13 9l-2 1 .500-2z" fill={s} />
        </Icon>
      </button>
      <button className="ml-[17px]">English (United States)</button>
      <div className="ml-auto flex h-full items-center">
        <button className="flex items-center gap-[6px] text-[12px]">
          <Icon w={14} h={13}>
            <path d="M3 5h8L7 0z" fill={s} />
            <path d="M0 6.500h14M0 9.500h14M0 12.500h9" stroke={s} strokeWidth="1.300" />
          </Icon>
          Notes
        </button>
        <button className="ml-[21px] flex items-center gap-[5px] text-[12px]">
          <Icon w={15} h={14}>
            <path d="M0 0h15v10H9l-3 4v-4H0z" fill="#777" />
          </Icon>
          Comments
        </button>
        <button aria-label="Normal view" className="ml-5 flex h-full w-[41px] items-center justify-center bg-[#cacaca]">
          <Icon w={15} h={14}>
            <path d="M.750.750h13.500v12.500H.750zM4 1v12M7 4h5v4H7zM4 10.500h10" stroke={s} strokeWidth="1.300" />
          </Icon>
        </button>
        <button aria-label="Slide sorter" className="flex w-[41px] justify-center">
          <Icon w={14} h={14}>
            <path d="M.750.750h4v4h-4zM9 .750h4v4H9zM.750 9h4v4h-4zM9 9h4v4H9z" stroke={s} strokeWidth="1.300" />
          </Icon>
        </button>
        <button aria-label="Reading view" className="flex w-[41px] justify-center">
          <Icon w={14} h={14}>
            <path d="M7 2L5 1H.750v10.500H5l2 1 2-1h4.250V1H9zM7 1v12M2 3.500h3M2 6h3M2 8.500h3M9 3.500h3M9 6h3M9 8.500h3" stroke={s} strokeWidth="1.200" />
          </Icon>
        </button>
        <button aria-label="Slide show" className="flex w-[40px] justify-center">
          <Icon w={14} h={14}>
            <path d="M0 1.500h14M2 2v6.500h10V2M4 4.500h6M7 9v4M4 13h6" stroke={s} strokeWidth="1.300" />
          </Icon>
        </button>
        <button aria-label="Zoom out" className="ml-[6px] h-[3px] w-[10px] bg-[#6b6b6b]" />
        <div className="relative ml-1 flex w-[125px] items-center">
          <span className="absolute left-[62px] top-1/2 h-[7px] w-px -translate-y-1/2 bg-[#a0a0a0]" />
          <input
            type="range"
            aria-label="Zoom"
            min={0}
            max={100}
            defaultValue={41}
            className="h-[14px] w-full appearance-none bg-[linear-gradient(#a0a0a0,#a0a0a0)] bg-[length:100%_1px] bg-center bg-no-repeat [&::-webkit-slider-thumb]:h-[14px] [&::-webkit-slider-thumb]:w-[5px] [&::-webkit-slider-thumb]:appearance-none [&::-webkit-slider-thumb]:bg-[#666]"
          />
        </div>
        <button aria-label="Zoom in" className="ml-1">
          <Icon w={12} h={12}>
            <path d="M0 6h12M6 0v12" stroke={s} strokeWidth="2.500" />
          </Icon>
        </button>
        <button className="ml-[14px] w-[42px] text-left">83%</button>
        <button aria-label="Fit slide to window" className="mr-[7px]">
          <Icon w={15} h={15}>
            <path d="M.750.750h13.500v13.500H.750zM7.500 1v4M7.500 10v4M1 7.500h4M10 7.500h4M6 3.500L7.500 5 9 3.500M6 11.500L7.500 10 9 11.500" stroke={s} strokeWidth="1.200" />
          </Icon>
        </button>
      </div>
    </footer>
  );
}

/* ---------- taskbar ---------- */

function TaskButton({ label, state, children }: { label: string; state?: "open" | "active" | "multi"; children: ReactNode }) {
  return (
    <button aria-label={label} className={`relative flex h-full w-[62px] items-center justify-center ${state === "active" ? "bg-[#4a4848]" : ""}`}>
      <Icon w={30} h={30}>{children}</Icon>
      {state === "active" && <span className="absolute inset-x-0 bottom-0 h-[3px] bg-[#76b9ed]" />}
      {state === "open" && <span className="absolute inset-x-[6px] bottom-0 h-[3px] bg-[#76b9ed]" />}
      {state === "multi" && (
        <span className="absolute inset-x-[6px] bottom-0 h-[3px] border-r-[11px] border-[#5a8fb8] bg-[#76b9ed]" />
      )}
    </button>
  );
}

function Taskbar() {
  return (
    <div className="flex h-[50px] shrink-0 items-center bg-[linear-gradient(90deg,#1e1d1d_0%,#1e1d1d_22%,#231b1b_30%,#1e1d1d_40%,#1e1d1d_78%,#33191b_88%,#37191b_100%)] text-white">
      <button aria-label="Start" className="flex h-full w-[60px] items-center justify-center">
        <Icon w={20} h={20}>
          <path d="M0 3l8-1.200v7.700H0zM9 1.600L20 0v9.500H9zM0 10.500h8v7.700L0 17zM9 10.500h11V20L9 18.400z" fill="#fff" />
        </Icon>
      </button>
      <label className="flex h-full w-[430px] items-center border border-[#c4c4c4] bg-[#f1f1f1] pl-[14px]">
        <Icon w={21} h={21}>
          <circle cx="13" cy="7.500" r="6.500" stroke="#111" strokeWidth="1.500" />
          <path d="M8.500 12L1 20" stroke="#111" strokeWidth="1.500" />
        </Icon>
        <input
          aria-label="Type here to search"
          placeholder="Type here to search"
          className="ml-[14px] min-w-0 flex-1 bg-transparent text-[18px] placeholder:text-[#333]"
        />
      </label>
      <button aria-label="Cortana" className="flex w-[60px] justify-center">
        <Icon w={20} h={20}>
          <circle cx="10" cy="10" r="8" stroke="#fff" strokeWidth="3" />
        </Icon>
      </button>
      <button aria-label="Task view" className="mr-px flex w-[62px] justify-center">
        <Icon w={21} h={20}>
          <path d="M1 .500v3.500h12V.500M1 19.500V16h12v3.500M1 6.500h12v7H1zM19 0v5M19 11v9" stroke="#fff" strokeWidth="1.400" />
          <path d="M17.500 6.500h3v3h-3z" fill="#fff" />
        </Icon>
      </button>
      <TaskButton label="PyCharm">
        <path d="M1 1h28v28H1z" fill="#21d789" />
        <path d="M19 1h10v15L22 8z" fill="#07c3f2" />
        <path d="M29 14v15H3l22-6z" fill="#e9f253" />
        <path d="M5 5h20v20H5z" fill="#060606" />
        <path d="M7 21.500h8" stroke="#fff" strokeWidth="2" />
        <text x="6" y="16" fontSize="11" fontWeight="700" fill="#fff">PC</text>
      </TaskButton>
      <TaskButton label="File Explorer" state="multi">
        <path d="M1 3h12l2 2h13v20H1z" fill="#ffd766" />
        <path d="M1 3h12l1 2-2 2H1z" fill="#e5a50a" />
        <path d="M6 26V18q0-3 3-3h12q3 0 3 3v8h-4v-6H10v6z" fill="#3f93d9" />
      </TaskButton>
      <TaskButton label="Mail">
        <path d="M0 11L15 1l15 10v18H0z" fill="#0a5da8" />
        <path d="M3 10h25L16 22z" fill="#f3f3f3" />
        <path d="M0 11l15 9L30 11v18H0z" fill="#28a8ea" />
        <path d="M15 20l15-9v18z" fill="#3fd0fb" />
      </TaskButton>
      <TaskButton label="XAMPP">
        <rect width="30" height="30" rx="3" fill="#f37623" />
        <rect x="2" y="1" width="26" height="3" rx="1" fill="#f9b58a" />
        <path
          d="M10 8C5 8 5 14 9 15 5 16 5 23 10 23c3 0 4-2 5-5 1 3 2 5 5 5 5 0 5-7 1-8 4-1 4-7-1-7-3 0-4 2-5 5-1-3-2-5-5-5z"
          stroke="#fff"
          strokeWidth="4"
          strokeLinejoin="round"
        />
      </TaskButton>
      <TaskButton label="Edge">
        <path d="M3 14Q5 3 16 3q12 1 11 15H11q1 7 8 6 4 0 7-2v6q-4 2-9 2Q6 29 6 19q0-7 6-10-6 0-9 5zm8-1h9q0-5-4.500-5T11 13z" fill="#0078d7" />
      </TaskButton>
      <TaskButton label="Visual Studio">
        <path d="M0 8l4-2 18 15-2 4L5 12v7l-1 4-4-2z" fill="#7b3fb5" />
        <path d="M0 21L20 1l3 8L5 24z" fill="#9252d0" />
        <path d="M21 0l9 4v22l-9 4z" fill="#b57bee" />
        <path d="M0 8l4-2v17l-4-2z" fill="#602f93" />
      </TaskButton>
      <TaskButton label="Microsoft Store">
        <path d="M10 10V6q0-5 5-5t5 5v4M13 9V6q0-3 4-3" stroke="#ccc" strokeWidth="1.500" />
        <path d="M1 8h28v21H1z" fill="#fff" />
        <path d="M9 12h6v6H9z" fill="#f25022" />
        <path d="M16 12h6v6h-6z" fill="#7fba00" />
        <path d="M9 19h6v6H9z" fill="#00a4ef" />
        <path d="M16 19h6v6h-6z" fill="#ffb900" />
      </TaskButton>
      <TaskButton label="Sublime Text">
        <rect width="30" height="30" rx="2" fill="#4b4b4b" />
        <path d="M23 5v5l-9 3 8 2v5L7 25v-5l9-3-8-2v-5z" fill="#ff9800" />
      </TaskButton>
      <TaskButton label="Code::Blocks">
        <path d="M2 1l13 1v13l-12 1z" fill="#c62828" />
        <path d="M17 1h11v12l-11 1z" fill="#3cb82c" />
        <path d="M3 17l12-1v11L4 30z" fill="#c4bd2e" />
        <path d="M17 16l11-1v11l-11 2z" fill="#4a16c0" />
      </TaskButton>
      <TaskButton label="TeamViewer">
        <rect width="30" height="30" rx="2" fill="#0e7fe0" />
        <circle cx="15" cy="15" r="13" fill="#fff" />
        <path d="M3 15l7-5v3.500h10V10l7 5-7 5v-3.500H10V20z" fill="#0e6fc8" />
      </TaskButton>
      <TaskButton label="VirtualBox">
        <path d="M15 1l12 6v16l-12 6-12-6V7z" fill="#9dbce8" stroke="#1c2f66" />
        <path d="M15 2l11 5-11 5L4 7z" fill="#d5e6e4" />
        <path d="M15 12l11-5v15l-11 6z" fill="#c5d0dc" />
        <path d="M15 12L4 7v15l11 6z" fill="#6f97e0" />
      </TaskButton>
      <TaskButton label="PowerPoint" state="active">
        <path d="M13 4h15v22H13z" fill="#fff" stroke="#d24726" />
        <path d="M18 18h8M18 21.500h8" stroke="#d24726" strokeWidth="1.500" />
        <circle cx="21" cy="11" r="4" fill="#d24726" />
        <path d="M2 4l15-3v28L2 26z" fill="#d24726" />
        <text x="5" y="20" fontSize="14" fontWeight="700" fill="#fff">P</text>
      </TaskButton>
      <TaskButton label="Settings" state="open">
        <circle cx="15" cy="15" r="7" stroke="#fff" strokeWidth="3" />
        <path d="M15 4v4M15 22v4M4 15h4M22 15h4M7.200 7.200l2.800 2.800M20 20l2.800 2.800M22.800 7.200L20 10M10 20l-2.800 2.800" stroke="#fff" strokeWidth="4" />
      </TaskButton>
      <TaskButton label="Acrobat Reader" state="open">
        <path d="M1 1h28v28H1z" fill="#c80a0a" />
        <path d="M1 18h28v11H1z" fill="#8a0606" opacity=".6" />
        <path
          d="M7 23c-1-3 9-7 15-5 3 1 1 4-2 2-4-2-8-7-7-12 1-3 3 0 2 3-1 5-5 12-8 12z"
          stroke="#fff"
          strokeWidth="1.500"
        />
      </TaskButton>
      <TaskButton label="Chrome" state="open">
        <circle cx="15" cy="15" r="13.500" fill="#ffcd40" />
        <path d="M15 15L3.300 8.300A13.500 13.500 0 0 1 26.700 8.300z" fill="#db4437" />
        <path d="M3.300 8.300A13.500 13.500 0 0 0 14 28.500L20 18 9 18z" fill="#0f9d58" />
        <path d="M15 8.500h12" stroke="#db4437" />
        <circle cx="15" cy="15" r="6.500" fill="#fff" />
        <circle cx="15" cy="15" r="5" fill="#4285f4" />
      </TaskButton>
      <div className="ml-auto flex h-full items-center">
        <button aria-label="Show hidden icons" className="flex w-[30px] justify-center">
          <Icon w={17} h={10}>
            <path d="M1 9l7.500-8L16 9" stroke="#fff" strokeWidth="1.500" />
          </Icon>
        </button>
        <button aria-label="Updates" className="flex w-[30px] justify-center">
          <Icon w={21} h={20}>
            <path d="M1 3l18.500-2v16H14M1 3v14l10 1" stroke="#fff" strokeWidth="1.300" />
            <path d="M6 9q2-4 7-3M14 4v4h-4M14 11q-2 3-6 2M6 16v-4h4" stroke="#fff" strokeWidth="1.300" />
            <circle cx="16" cy="15.500" r="4.500" fill="#ff9800" />
          </Icon>
        </button>
        <button aria-label="Battery" className="flex w-[31px] justify-center">
          <Icon w={21} h={16}>
            <path d="M5 3.500h13.500v9H4V9M20 6v4M1.500 0v3M4.500 0v3M0 3h6v2q0 2-3 2T0 5zM3 7v3" stroke="#fff" strokeWidth="1.300" />
            <path d="M7 5h10v6H5V9z" fill="#fff" />
          </Icon>
        </button>
        <button aria-label="Wireless network" className="flex w-[30px] justify-center">
          <Icon w={17} h={17}>
            <path d="M1 16A15 15 0 0 1 16 1M5 16A11 11 0 0 1 16 5.500M9 16a7 7 0 0 1 7-6.500" stroke="#ddd" strokeWidth="1.500" />
            <circle cx="14.500" cy="14.500" r="1.800" fill="#fff" />
          </Icon>
        </button>
        <button aria-label="Volume" className="flex w-[30px] justify-center">
          <Icon w={20} h={16}>
            <path d="M1 5.500h3L8 2v13l-4-4H1zM11 6q2 2 0 4.500M14 4q3.500 4 0 8.500" stroke="#fff" strokeWidth="1.400" />
            <path d="M17 1.500q5 6 0 13" stroke="#888" strokeWidth="1.300" />
          </Icon>
        </button>
        <button className="w-[82px] text-center text-[14px] leading-[23px]">
          11:12 PM
          <br />
          3/14/2020
        </button>
        <button aria-label="Notifications" className="ml-[17px] mr-[25px]">
          <Icon w={20} h={20}>
            <path d="M0 0h20v17h-8l-2 3-2-3H0z" fill="#fff" />
            <path d="M4 5h12M4 9h12M4 13h8" stroke="#222" strokeWidth="1.500" />
          </Icon>
        </button>
        <span className="mr-[5px] h-full w-px bg-[#8a7a7b]" />
      </div>
    </div>
  );
}

export default function App() {
  return (
    <div className="flex h-screen w-full flex-col overflow-hidden bg-[#e6e6e6] font-['Open_Sans','Noto_Sans',sans-serif]">
      <header className="relative shrink-0 bg-[#b7472a]">
        <Pattern />
        <TitleBar />
        <TabStrip />
      </header>
      <div className="relative flex h-[112px] shrink-0 border-b border-[#d0d0d0] bg-[#f1f1f1]">
        <Clipboard />
        <Slides />
        <FontGroup />
        <Paragraph />
        <Drawing />
        <Editing />
        <button aria-label="Collapse the ribbon" className="ml-auto mr-[11px] self-end pb-[6px]">
          <Icon w={11} h={8}>
            <path d="M1 7l4.500-5L10 7" stroke="#666" strokeWidth="2" />
          </Icon>
        </button>
      </div>
      <div className="flex min-h-0 flex-1">
        <SlideList />
        <Editor />
      </div>
      <StatusBar />
      <Taskbar />
    </div>
  );
}
